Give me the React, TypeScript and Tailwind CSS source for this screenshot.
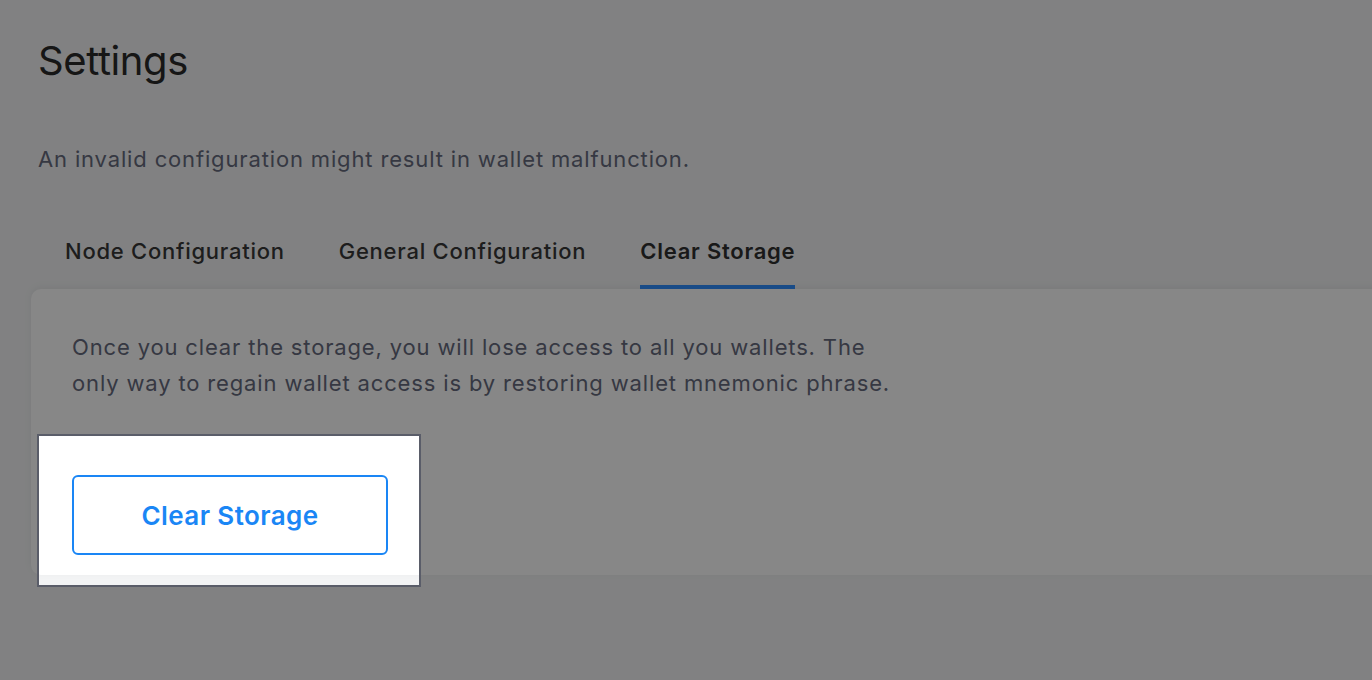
import React from "react";

export default function App() {
  const tabs = [
    { label: "Node Configuration", active: false },
    { label: "General Configuration", active: false },
    { label: "Clear Storage", active: true },
  ];
  return (
    <div
      className="relative w-full h-[680px] overflow-hidden bg-[#f3f4f5]"
      style={{ fontFamily: "Inter, 'Noto Sans', sans-serif" }}
    >
      <div className="pt-[37px] pl-[38px]">
        <h1 className="text-[40px] leading-[48px] font-normal text-[#2a2a2a] tracking-[-0.4px]">
          Settings
        </h1>
        <p className="mt-[60px] text-[22px] leading-[28px] text-[#666b7e] tracking-[0.85px]">
          An invalid configuration might result in wallet malfunction.
        </p>
      </div>
      <div className="mt-[64px] pl-[65px] flex gap-[54px]">
        {tabs.map((t) => (
          <div key={t.label} className="flex flex-col">
            <span
              className={
                "text-[22px] leading-[28px] tracking-[0.75px] " +
                (t.active ? "font-semibold text-[#303030]" : "font-medium text-[#383838]")
              }
            >
              {t.label}
            </span>
            <div
              className={
                "mt-[20px] h-[4px] " + (t.active ? "bg-[#2f8fff]" : "bg-transparent")
              }
            />
          </div>
        ))}
      </div>
      <div className="ml-[31px] mr-[-20px] h-[286px] rounded-[10px] bg-white shadow-[0_-2px_8px_rgba(0,0,0,0.05)] pl-[41px] pt-[40px]">
        <p className="text-[22px] leading-[36px] text-[#666b7e] tracking-[0.85px] whitespace-nowrap">
          Once you clear the storage, you will lose access to all you wallets. The
          <br />
          only way to regain wallet access is by restoring wallet mnemonic phrase.
        </p>
        <button className="mt-[74px] w-[316px] h-[80px] rounded-[6px] border-2 border-[#1a86f5] bg-white text-[#1a86f5] text-[26px] font-semibold tracking-[0.4px]">
          Clear Storage
        </button>
      </div>
      <div className="absolute left-[37px] top-[434px] w-[384px] h-[153px] border-2 border-[#5a5d69] shadow-[0_0_0_3000px_rgba(0,0,0,0.47)] pointer-events-none" />
    </div>
  );
}
